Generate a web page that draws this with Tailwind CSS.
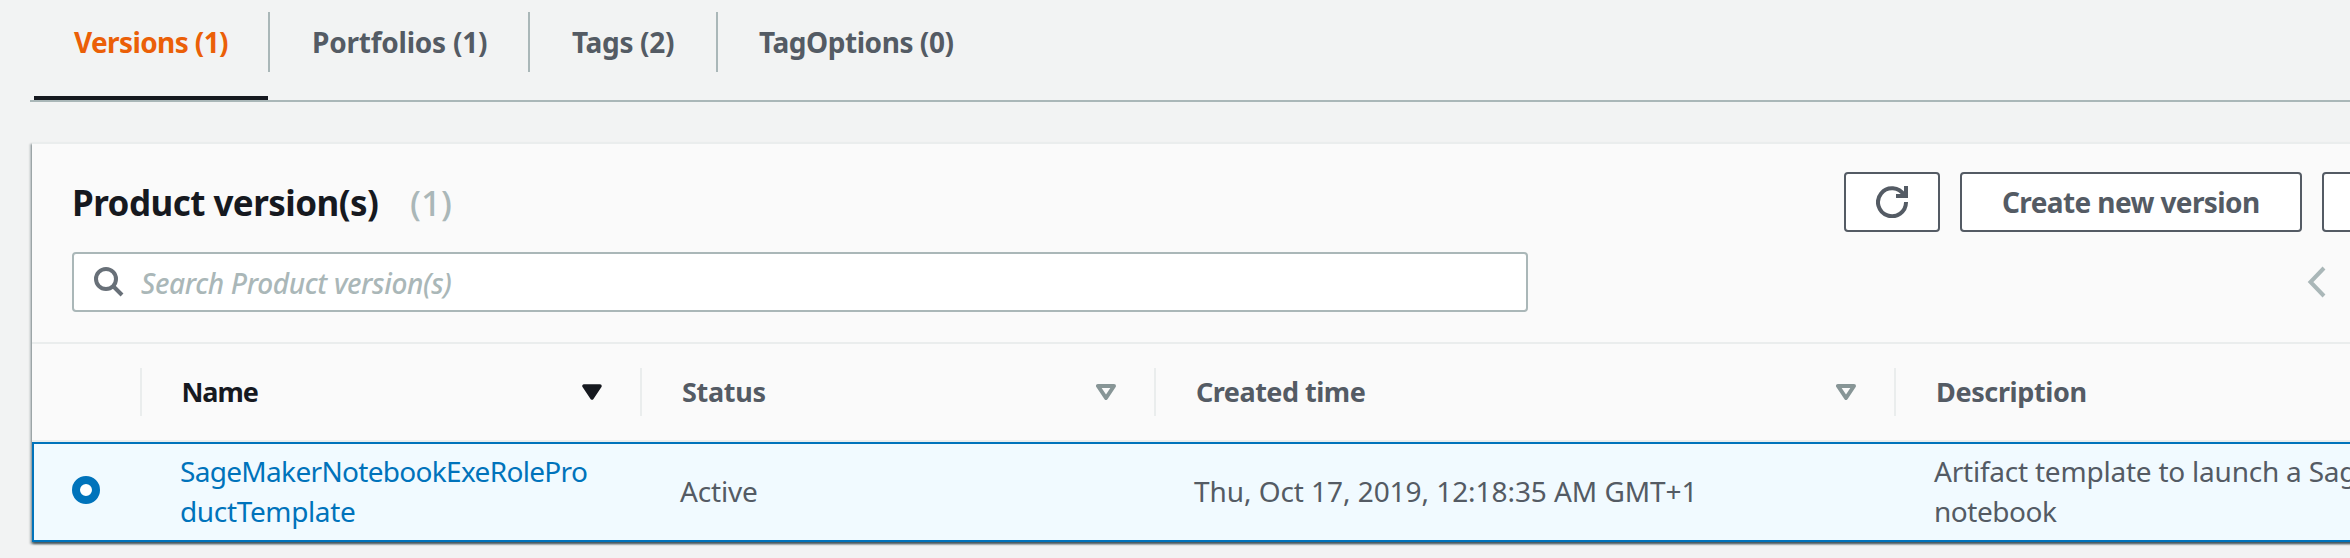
<!DOCTYPE html>
<html lang="en">
<head>
<meta charset="utf-8">
<title>Product versions</title>
<script src="https://cdn.jsdelivr.net/npm/@tailwindcss/browser@4"></script>
</head>
<body class="h-[558px] w-[2350px] overflow-hidden bg-[#f2f3f3] font-['Noto_Sans',sans-serif] text-[28px] leading-10 text-[#545b64]">

<!-- Tabs -->
<nav class="ml-[30px] flex h-[102px] border-b-2 border-[#aab7b8] pl-1 font-bold whitespace-nowrap">
  <div class="flex w-[234px] items-start border-b-4 border-[#16191f] pt-[22px] pl-10 tracking-[-0.62px] text-[#eb5f07]">Versions (1)</div>
  <div class="mt-3 h-[60px] w-[260px] border-l-2 border-[#aab7b8] pt-[10px] pl-[42px] tracking-[-0.23px]">Portfolios (1)</div>
  <div class="mt-3 h-[60px] w-[188px] border-l-2 border-[#aab7b8] pt-[10px] pl-[42px] tracking-[-0.32px]">Tags (2)</div>
  <div class="mt-3 h-[60px] border-l-2 border-[#aab7b8] pt-[10px] pl-[41px] tracking-[-0.45px]">TagOptions (0)</div>
</nav>

<!-- Versions panel -->
<section class="mt-10 ml-8 h-[400px] w-[2500px] border-t-2 border-[#eaeded] bg-[#fafafa] shadow-[0_2px_2px_0_rgba(0,28,36,0.5),2px_2px_2px_0_rgba(0,28,36,0.25),-2px_2px_2px_0_rgba(0,28,36,0.25)]">
  <div class="h-[200px] border-b-2 border-[#eaeded] pl-10">
    <div class="flex h-[88px] pt-7 whitespace-nowrap">
      <h1 class="h-[60px] w-[338px] pt-px text-[35px] leading-[60px] font-bold tracking-[-0.55px] text-[#16191f]">Product version(s)</h1>
      <span class="w-[1434px] pt-px text-[35px] leading-[60px] font-medium text-[#aab7b8]">(1)</span>
      <button class="flex h-[60px] w-24 items-center justify-center rounded border-2 border-[#545b64] bg-white">
        <svg class="size-8" viewBox="0 0 32 32" fill="none" stroke="#545b64" stroke-width="4"><path d="M30 16A14 14 0 1 1 28 9"/><path d="M20 10H30V0"/></svg>
      </button>
      <button class="ml-5 h-[60px] w-[342px] rounded border-2 border-[#545b64] bg-white pl-10 text-left font-bold tracking-[-0.61px]">Create new version</button>
      <button class="ml-5 h-[60px] w-[200px] rounded border-2 border-[#545b64] bg-white"></button>
    </div>
    <div class="mt-5 flex h-[60px] items-center">
      <div class="flex h-[60px] w-[1456px] items-center rounded border-2 border-[#aab7b8] bg-white pl-5">
        <svg class="size-[30px]" viewBox="0 0 30 30" fill="none" stroke="#687078" stroke-width="4"><circle cx="12" cy="12" r="10"/><path d="M19 19l9 9"/></svg>
        <span class="ml-[17px] pt-0.5 font-medium tracking-[-0.35px] whitespace-nowrap italic text-[#aab7b8]">Search Product version(s)</span>
      </div>
      <svg class="ml-[779px] h-[32px] w-5" viewBox="0 0 20 32" fill="none" stroke="#aab7b8" stroke-width="4"><path d="M17 2L3.5 16L17 30"/></svg>
    </div>
  </div>

  <!-- Column headings -->
  <div class="flex h-[98px] border-b-2 border-[#eaeded] pt-6 pl-[108px] text-[27px] font-bold whitespace-nowrap">
    <div class="flex h-12 w-[500px] justify-between border-l-2 border-[#eaeded] pt-1 pr-[38px] pl-[39.5px] tracking-[-1.1px] text-[#16191f]">Name
      <svg class="mt-3 h-4 w-5" viewBox="0 0 20 16"><path d="M2 2H18L10 14Z" fill="#16191f" stroke="#16191f" stroke-width="3.5" stroke-linejoin="round"/></svg>
    </div>
    <div class="flex h-12 w-[514px] justify-between border-l-2 border-[#eaeded] pt-1 pr-[38px] pl-10 tracking-[-0.3px]">Status
      <svg class="mt-3 h-4 w-5" viewBox="0 0 20 16"><path d="M2 2H18L10 14Z" fill="none" stroke="#879596" stroke-width="4" stroke-linejoin="round"/></svg>
    </div>
    <div class="flex h-12 w-[740px] justify-between border-l-2 border-[#eaeded] pt-1 pr-[38px] pl-10 tracking-[-0.5px]">Created time
      <svg class="mt-3 h-4 w-5" viewBox="0 0 20 16"><path d="M2 2H18L10 14Z" fill="none" stroke="#879596" stroke-width="4" stroke-linejoin="round"/></svg>
    </div>
    <div class="h-12 border-l-2 border-[#eaeded] pt-1 pl-10 tracking-[-0.37px]">Description</div>
  </div>

  <!-- Selected row -->
  <div class="flex h-[100px] items-center border-2 border-[#0073bb] bg-[#f1faff] pl-[38px] whitespace-nowrap">
    <span class="mt-[-4px] size-7 rounded-full border-8 border-[#0073bb] bg-white"></span>
    <div class="ml-20 mt-[-2px] w-[500px] text-[#0073bb]">
      <div class="tracking-[-0.68px]">SageMakerNotebookExeRolePro</div>
      <div class="tracking-[-0.36px]">ductTemplate</div>
    </div>
    <div class="mt-[-2px] w-[514px] tracking-[-0.18px]">Active</div>
    <div class="mt-[-2px] w-[740px] tracking-[-0.06px]">Thu, Oct 17, 2019, 12:18:35 AM GMT+1</div>
    <div class="mt-[-2px]">
      <div class="tracking-[-0.22px]">Artifact template to launch a SageMaker</div>
      <div class="tracking-[-0.46px]">notebook</div>
    </div>
  </div>
</section>
</body>
</html>
